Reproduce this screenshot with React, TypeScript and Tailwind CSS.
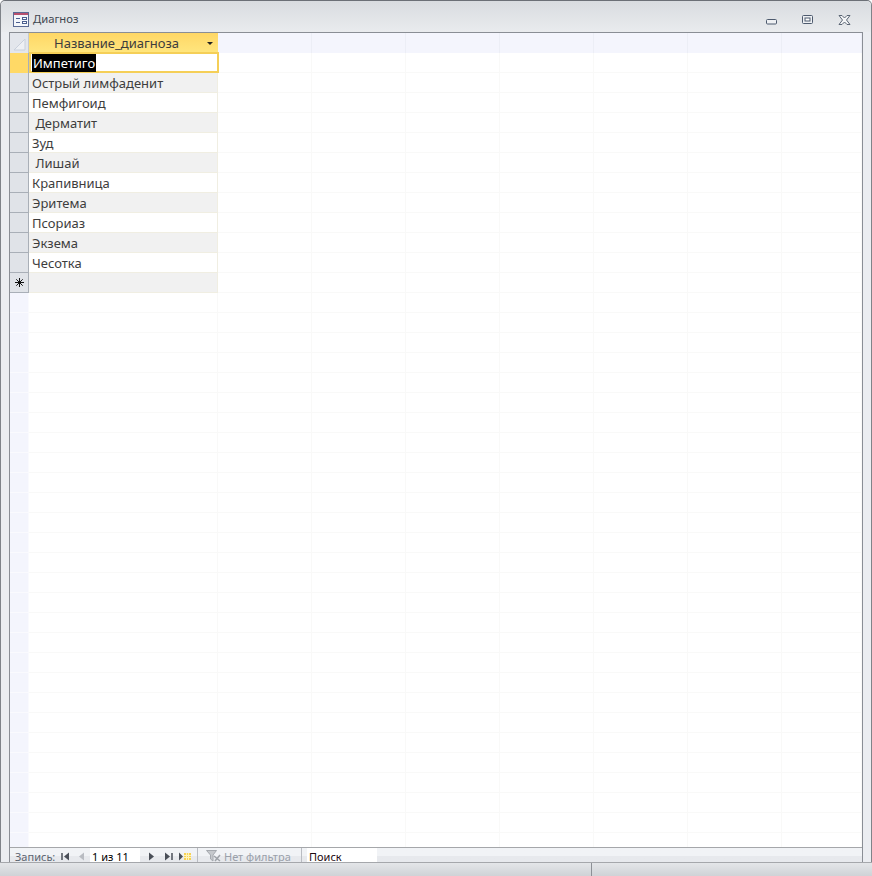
const diagnoses = [
  "Импетиго",
  "Острый лимфаденит",
  "Пемфигоид",
  " Дерматит",
  "Зуд",
  " Лишай",
  "Крапивница",
  "Эритема",
  "Псориаз",
  "Экзема",
  "Чесотка",
];

const emptyColumns = [94, 94, 94, 94, 94, 94, 80];
const emptyRows = Array.from({ length: 28 }, (_, i) => i);

function FormIcon() {
  return (
    <svg width="16" height="15" viewBox="0 0 16 15" className="shrink-0">
      <rect x="0.5" y="0.5" width="15" height="14" fill="#f3f6fb" stroke="#5a6a94" />
      <rect x="1" y="1" width="14" height="2" fill="#b8506e" />
      <path d="M3 6.500h4M3 10.500h4" stroke="#4b5f8f" strokeWidth="1" />
      <rect x="9.500" y="5.500" width="4" height="2" fill="#fff" stroke="#4b5f8f" />
      <rect x="9.500" y="9.500" width="4" height="2" fill="#fff" stroke="#4b5f8f" />
    </svg>
  );
}

function WindowButtons() {
  return (
    <div className="flex items-center">
      <svg width="11" height="6" viewBox="0 0 11 6" className="mt-[5px] mr-[25px]">
        <rect x="0.5" y="0.5" width="10" height="4.500" rx="1" fill="#eef0f3" stroke="#4d5a6e" />
      </svg>
      <svg width="11" height="9" viewBox="0 0 11 9" className="mr-[25px]">
        <rect x="0.5" y="0.5" width="10" height="8" rx="1" fill="#eef0f3" stroke="#4d5a6e" />
        <rect x="3" y="3" width="5" height="3" fill="#fff" stroke="#4d5a6e" />
      </svg>
      <svg width="13" height="10" viewBox="0 0 13 10">
        <path
          d="M1 0.500h3L6.500 3 9 0.500h3L8.500 5l3.500 4.500H9L6.500 7 4 9.500H1L4.500 5z"
          fill="#f4f5f7"
          stroke="#5b6675"
          strokeWidth="1"
        />
      </svg>
    </div>
  );
}

function HeaderRow() {
  return (
    <div className="flex h-5 shrink-0">
      <div className="flex w-[19px] shrink-0 items-end justify-center border-r border-[#c4c9d0] bg-[#e3e6ec] pb-[2px]">
        <svg width="13" height="13" viewBox="0 0 13 13">
          <path d="M1 12L12 1v11z" fill="#eef0f4" stroke="#c9d0dc" />
        </svg>
      </div>
      <div className="relative w-[189px] shrink-0 bg-gradient-to-b from-[#ffd765] to-[#ffe67e] pr-[14px] text-center text-[13px] leading-5 text-[#3d3d3d]">
        Название_диагноза
        <svg width="6" height="3" viewBox="0 0 6 3" className="absolute right-[5px] top-[9px]">
          <path d="M0 0h6L3 3z" fill="#222" />
        </svg>
      </div>
      {emptyColumns.map((w, i) => (
        <div key={i} style={{ width: w }} className="shrink-0 border-r border-[#eceef6] bg-[#f4f5fd]" />
      ))}
    </div>
  );
}

function DataRow({ text, index }: { text: string; index: number }) {
  const selected = index === 0;
  return (
    <div className="flex h-5 shrink-0">
      <div
        className={
          selected
            ? "w-[19px] shrink-0 border-r border-[#a9afb7] bg-[#ffd966]"
            : "w-[19px] shrink-0 border-r border-b border-[#a9afb7] bg-[#e0e3e8]"
        }
      />
      {selected ? (
        <div className="relative z-10 -mt-[1px] -mr-[1px] h-[21px] w-[190px] shrink-0 border-2 border-[#f5cf57] bg-white pl-[1px] text-[13px] leading-[17px] text-white">
          <span className="inline-block bg-black px-[1px] leading-[18px]">{text}</span>
        </div>
      ) : (
        <div
          className={
            index % 2 === 1
              ? "w-[189px] shrink-0 whitespace-pre border-r border-b border-[#f0eee2] bg-[#f1f1f1] pt-[1px] pl-[3px] text-[13px] leading-[18px] text-[#3d3d3d]"
              : "w-[189px] shrink-0 whitespace-pre border-r border-b border-[#f0eee2] bg-white pt-[1px] pl-[3px] text-[13px] leading-[18px] text-[#3d3d3d]"
          }
        >
          {text}
        </div>
      )}
      <EmptyCells />
    </div>
  );
}

function EmptyCells() {
  return (
    <>
      {emptyColumns.map((w, i) => (
        <div key={i} style={{ width: w }} className="shrink-0 border-r border-b border-[#f9f9f8] bg-white" />
      ))}
    </>
  );
}

function NewRow() {
  return (
    <div className="flex h-5 shrink-0">
      <div className="flex w-[19px] shrink-0 items-center justify-center border-r border-b border-[#a9afb7] bg-[#e0e3e8]">
        <svg width="9" height="9" viewBox="0 0 9 9">
          <path d="M4.500 0v9M0 4.500h9M1.300 1.300l6.400 6.400M7.700 1.300l-6.400 6.400" stroke="#111" strokeWidth="1" />
        </svg>
      </div>
      <div className="w-[189px] shrink-0 border-r border-b border-[#f0eee2] bg-[#f1f1f1]" />
      <EmptyCells />
    </div>
  );
}

function EmptyRow() {
  return (
    <div className="flex h-5 shrink-0">
      <div className="w-[19px] shrink-0 border-r border-b border-[#fafafe] bg-[#f4f5fd]" />
      <div className="w-[189px] shrink-0 border-r border-b border-[#f9f9f8] bg-white" />
      <EmptyCells />
    </div>
  );
}

function NavBar() {
  return (
    <div className="flex h-[15px] shrink-0 overflow-hidden border-t border-[#a5a7aa] bg-gradient-to-b from-[#f1f3f6] from-60% to-[#e7e9ed] to-60% text-[11px] leading-[18px]">
      <span className="ml-[5px] w-[46px] text-[#5c6470]">Запись:</span>
      <svg width="9" height="9" viewBox="0 0 9 9" className="mt-[4px]">
        <path d="M1 1v7" stroke="#4a4f58" strokeWidth="1.500" />
        <path d="M8 0.500v8L3 4.500z" fill="#4a4f58" />
      </svg>
      <svg width="6" height="9" viewBox="0 0 6 9" className="mt-[4px] ml-[9px]">
        <path d="M5 0.500v8L0 4.500z" fill="#b9bcc2" />
      </svg>
      <div className="ml-[5px] w-[50px] bg-white pl-[2px] text-black">1 из 11</div>
      <svg width="6" height="9" viewBox="0 0 6 9" className="mt-[4px] ml-[8px]">
        <path d="M1 0.500v8l5-4z" fill="#4a4f58" />
      </svg>
      <svg width="8" height="9" viewBox="0 0 8 9" className="mt-[4px] ml-[11px]">
        <path d="M0 0.500v8l5-4z" fill="#4a4f58" />
        <path d="M7 1v7" stroke="#4a4f58" strokeWidth="1.500" />
      </svg>
      <svg width="13" height="9" viewBox="0 0 13 9" className="mt-[4px] ml-[6px]">
        <path d="M0 0.500v8l4-4z" fill="#4a4f58" />
        <rect x="5" y="1" width="7" height="7" fill="#f7d154" />
        <path d="M5 3.500h7M5 5.500h7M7.500 1v7M9.500 1v7" stroke="#fff4b8" strokeWidth="1" />
      </svg>
      <div className="ml-[5px] w-px bg-[#b9bcc2]" />
      <svg width="16" height="12" viewBox="0 0 16 12" className="mt-[2px] ml-[8px]">
        <path d="M0.500 0.500h10L7 5v6L4.500 9V5z" fill="#c5c8cc" stroke="#a4a8ae" />
        <path d="M8 6l6 5M14 5l-5 6" stroke="#9ea2a8" strokeWidth="1.500" />
      </svg>
      <span className="ml-[2px] w-[77px] text-[#9aa0aa]">Нет фильтра</span>
      <div className="w-px bg-[#b9bcc2]" />
      <div className="ml-[5px] w-[70px] bg-white pl-[2px] text-[#1c0a10]">Поиск</div>
    </div>
  );
}

export default function App() {
  return (
    <div className="flex h-[876px] w-[872px] flex-col overflow-hidden bg-white font-['Noto_Sans','Open_Sans',sans-serif]">
      <div className="flex min-h-0 flex-1 flex-col rounded-t-[5px] border border-b-0 border-[#7f8389] border-t-[#6c7077] bg-[#ebedf1]">
        <div className="flex h-[31px] shrink-0 items-center rounded-t-[5px] bg-gradient-to-b from-[#d9dce0] to-[#e9ebee] pt-[6px] pr-[20px] pl-[12px]">
          <FormIcon />
          <span className="ml-[4px] flex-1 text-[11.25px] text-[#3f4650]">Диагноз</span>
          <WindowButtons />
        </div>
        <div className="mr-[8px] ml-[8px] flex min-h-0 flex-1 flex-col border-x border-t border-[#8a8e95] bg-white">
          <div className="flex min-h-0 flex-1 flex-col overflow-hidden">
            <HeaderRow />
            {diagnoses.map((d, i) => (
              <DataRow key={i} text={d} index={i} />
            ))}
            <NewRow />
            {emptyRows.map((r) => (
              <EmptyRow key={r} />
            ))}
          </div>
          <NavBar />
        </div>
      </div>
      <div className="flex h-[14px] shrink-0 border-t border-[#a5a7ab] bg-gradient-to-b from-[#e4e6e9] to-[#cfd2d6]">
        <div className="w-[592px] border-r border-[#8c9096]" />
      </div>
    </div>
  );
}
